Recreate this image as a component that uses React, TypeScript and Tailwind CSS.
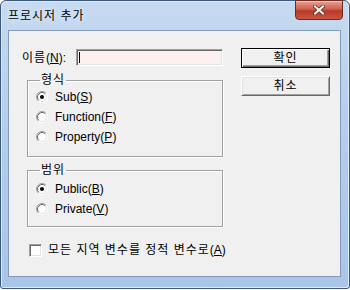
import React from "react";

function Radio({ checked }: { checked?: boolean }) {
  return (
    <svg width="12" height="12" viewBox="0 0 12 12" className="shrink-0">
      <circle cx="6" cy="6" r="4.2" fill="#ffffff" />
      <path d="M2.11 9.89 A5.5 5.5 0 0 1 9.89 2.11" stroke="#a0a0a0" fill="none" />
      <path d="M9.89 2.11 A5.5 5.5 0 0 1 2.11 9.89" stroke="#ffffff" fill="none" />
      <path d="M2.82 9.18 A4.5 4.5 0 0 1 9.18 2.82" stroke="#696969" fill="none" />
      <path d="M9.18 2.82 A4.5 4.5 0 0 1 2.82 9.18" stroke="#e3e3e3" fill="none" />
      {checked && <circle cx="6" cy="6" r="2" fill="#000000" />}
    </svg>
  );
}

function Option({ label, hot, checked }: { label: string; hot: string; checked?: boolean }) {
  return (
    <div className="flex h-[20px] items-center gap-[7px]">
      <Radio checked={checked} />
      <span>
        {label}(<span className="underline underline-offset-1">{hot}</span>)
      </span>
    </div>
  );
}

function GroupBox({ title, children, className }: { title: string; children: React.ReactNode; className?: string }) {
  return (
    <fieldset
      className={`ml-[5px] w-[196px] border border-[#a0a0a0] pl-[8px] shadow-[1px_1px_0_#ffffff,inset_1px_1px_0_#ffffff] ${className ?? ""}`}
    >
      <legend className="ml-[4px] px-[1px] leading-[14px] tracking-[1px]">{title}</legend>
      {children}
    </fieldset>
  );
}

export default function App() {
  return (
    <div className="h-[290px] w-[350px] bg-white font-['Liberation_Sans','Noto_Sans_CJK_KR',sans-serif] text-[12px] leading-[14px] text-black">
      <div className="flex h-[289px] flex-col rounded-t-[6px] rounded-b-[3px] border border-[#3b577d] bg-[linear-gradient(180deg,#c6dbf1_0%,#b3cdeb_45%,#a9c6e8_100%)] pb-[11px] pl-[7px] pr-[8px] shadow-[inset_1px_1px_0_#dfeaf7,inset_-1px_-1px_0_#dfeaf7]">
        {/* title bar */}
        <div className="flex h-[29px] items-start justify-between">
          <div className="pt-[7px] text-[12px] leading-[16px] tracking-[1px] [text-shadow:0_0_6px_#ffffff]">프로시저 추가</div>
          <div className="-mr-[2px] -mt-px flex h-[20px] w-[48px] items-center justify-center rounded-b-[4px] border border-[#6b2b25] bg-[linear-gradient(180deg,#e8a093_0%,#d0604e_45%,#b83a26_55%,#c9553f_100%)] shadow-[inset_0_1px_0_#f4c3b9]">
            <svg width="12" height="10" viewBox="0 0 12 10">
              <path d="M2 1.5 L10 8.5 M10 1.5 L2 8.5" stroke="#6a2a22" strokeWidth="3.6" strokeLinecap="square" />
              <path d="M2 1.5 L10 8.5 M10 1.5 L2 8.5" stroke="#ffffff" strokeWidth="2" strokeLinecap="square" />
            </svg>
          </div>
        </div>

        {/* client */}
        <div className="flex flex-1 items-start border border-[#8599ba] bg-[#f0f0f0]">
          <div className="flex w-[214px] flex-col pl-[13px] pt-[18px]">
            <div className="flex h-[17px] items-center justify-between">
              <span>
                <span className="tracking-[1px]">이름</span>(<span className="underline underline-offset-1">N</span>):
              </span>
              <div className="flex h-[17px] w-[147px] items-center border-b border-l border-r border-t border-b-white border-l-[#a0a0a0] border-r-white border-t-[#a0a0a0] bg-[#fcf0f0] pl-[2px] shadow-[inset_1px_1px_0_#696969,inset_-1px_-1px_0_#e3e3e3]">
                <div className="h-[11px] w-px bg-black" />
              </div>
            </div>

            <GroupBox title="형식" className="mt-[7px] pb-[9px]">
              <Option label="Sub" hot="S" checked />
              <Option label="Function" hot="F" />
              <Option label="Property" hot="P" />
            </GroupBox>

            <GroupBox title="범위" className="mt-[6px] pb-[7px] pt-[2px]">
              <Option label="Public" hot="B" checked />
              <Option label="Private" hot="V" />
            </GroupBox>

            <div className="ml-[7px] mt-[13px] flex h-[20px] items-center gap-[6px] whitespace-nowrap">
              <div className="h-[13px] w-[13px] shrink-0 border border-b-white border-l-[#a0a0a0] border-r-white border-t-[#a0a0a0] bg-white shadow-[inset_1px_1px_0_#696969,inset_-1px_-1px_0_#e3e3e3]" />
              <span>
                <span className="tracking-[1px]">모든 지역 변수를 정적 변수로</span>(<span className="underline underline-offset-1">A</span>)
              </span>
            </div>
          </div>

          <div className="ml-[18px] flex flex-col gap-[8px] pt-[17px]">
            <button className="flex h-[20px] w-[89px] items-center justify-center border border-black bg-[#f0f0f0] tracking-[1px] shadow-[inset_1px_1px_0_#ffffff,inset_-1px_-1px_0_#696969,inset_-2px_-2px_0_#a0a0a0]">
              확인
            </button>
            <button className="flex h-[20px] w-[89px] items-center justify-center border border-b-[#696969] border-l-white border-r-[#696969] border-t-white bg-[#f0f0f0] tracking-[1px] shadow-[inset_1px_1px_0_#e3e3e3,inset_-1px_-1px_0_#a0a0a0]">
              취소
            </button>
          </div>
        </div>
      </div>
    </div>
  );
}
